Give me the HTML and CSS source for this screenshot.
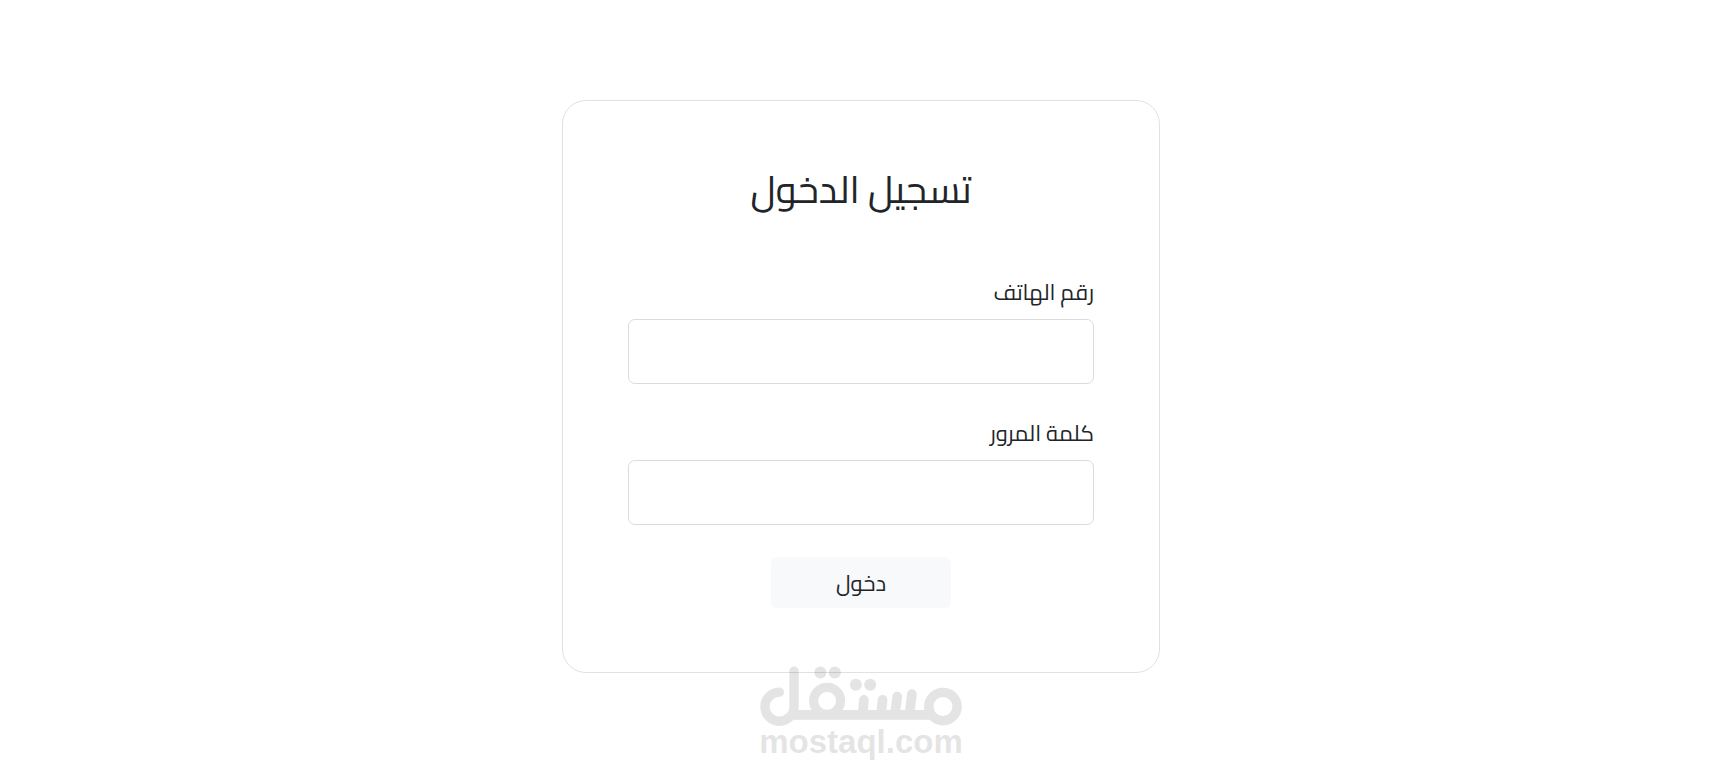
FILE: index.html
```html
<!DOCTYPE html>
<html lang="ar" dir="rtl">
<head>
    <meta charset="UTF-8">
    <meta name="viewport" content="width=device-width, initial-scale=1.0">
    <title>تسجيل الدخول</title>
    <link rel="stylesheet" href="styles.css">
</head>
<body>
    <main class="login-card">
        <h1 class="login-title">تسجيل الدخول</h1>
        <form class="login-form">
            <div class="field">
                <label for="phone">رقم الهاتف</label>
                <input type="tel" id="phone" name="phone">
            </div>
            <div class="field">
                <label for="password">كلمة المرور</label>
                <input type="password" id="password" name="password">
            </div>
            <button type="submit" class="btn-login">دخول</button>
        </form>
    </main>

    <!-- Watermark -->
    <div class="watermark" dir="ltr">
        <svg class="watermark-logo" viewBox="60 47 605 179" fill="none" stroke="#000" stroke-linecap="round" aria-hidden="true">
            <path stroke-width="28" d="M162 62V168A43.500 43.500 0 1 1 118 125"/>
            <path stroke-width="29" stroke-linecap="butt" d="M154 193H577"/>
            <circle stroke-width="27" cx="261" cy="151" r="40.500"/>
            <circle stroke-width="28" cx="608" cy="168" r="42.500"/>
            <path stroke-width="29" d="M371 148L368 188M427 148L423 188M471 138L465 188M515 131L508 188"/>
            <g fill="#000" stroke="none">
                <circle cx="241" cy="66" r="18"/>
                <circle cx="284" cy="66" r="18"/>
                <circle cx="347" cy="103" r="18"/>
                <circle cx="390" cy="103" r="18"/>
            </g>
        </svg>
        <span class="watermark-text">mostaql.com</span>
    </div>
</body>
</html>
```

FILE: styles.css
```css
* {
    box-sizing: border-box;
}
body {
    margin: 0;
    min-height: 100vh;
    padding: 100px 16px 40px;
    position: relative;
    background-color: #fff;
    color: #212529;
    font-family: Cairo, "DejaVu Sans", sans-serif;
}
.login-card {
    max-width: 598px;
    margin: 0 auto;
    padding: 64px 65px;
    border: 1px solid #e0e1e3;
    border-radius: 24px;
}
.login-title {
    margin: 0 0 62px;
    font-size: 38px;
    font-weight: 400;
    line-height: 48px;
    text-align: center;
}
.login-form {
    display: flex;
    flex-direction: column;
    gap: 32px;
}
.field {
    display: flex;
    flex-direction: column;
    gap: 10px;
}
label {
    font-size: 22px;
    line-height: 34px;
}
input {
    width: 100%;
    height: 65px;
    padding: 8px 16px;
    border: 1px solid #d9dce0;
    border-radius: 7px;
    background-color: #fff;
    color: #212529;
    font: inherit;
    font-size: 22px;
}
.btn-login {
    align-self: center;
    width: 180px;
    height: 51px;
    border: 0;
    border-radius: 6px;
    background-color: #f8f9fa;
    color: #212529;
    font: inherit;
    font-size: 22px;
    cursor: pointer;
}
.watermark {
    position: absolute;
    right: 0;
    bottom: 17px;
    left: 0;
    display: flex;
    flex-direction: column;
    align-items: center;
    opacity: 0.1;
    pointer-events: none;
}
.watermark-logo {
    width: 202px;
    height: 60px;
}
.watermark-text {
    color: #000;
    font-family: "Liberation Sans", Arial, sans-serif;
    font-size: 33px;
    font-weight: 700;
    line-height: 31px;
}
```
